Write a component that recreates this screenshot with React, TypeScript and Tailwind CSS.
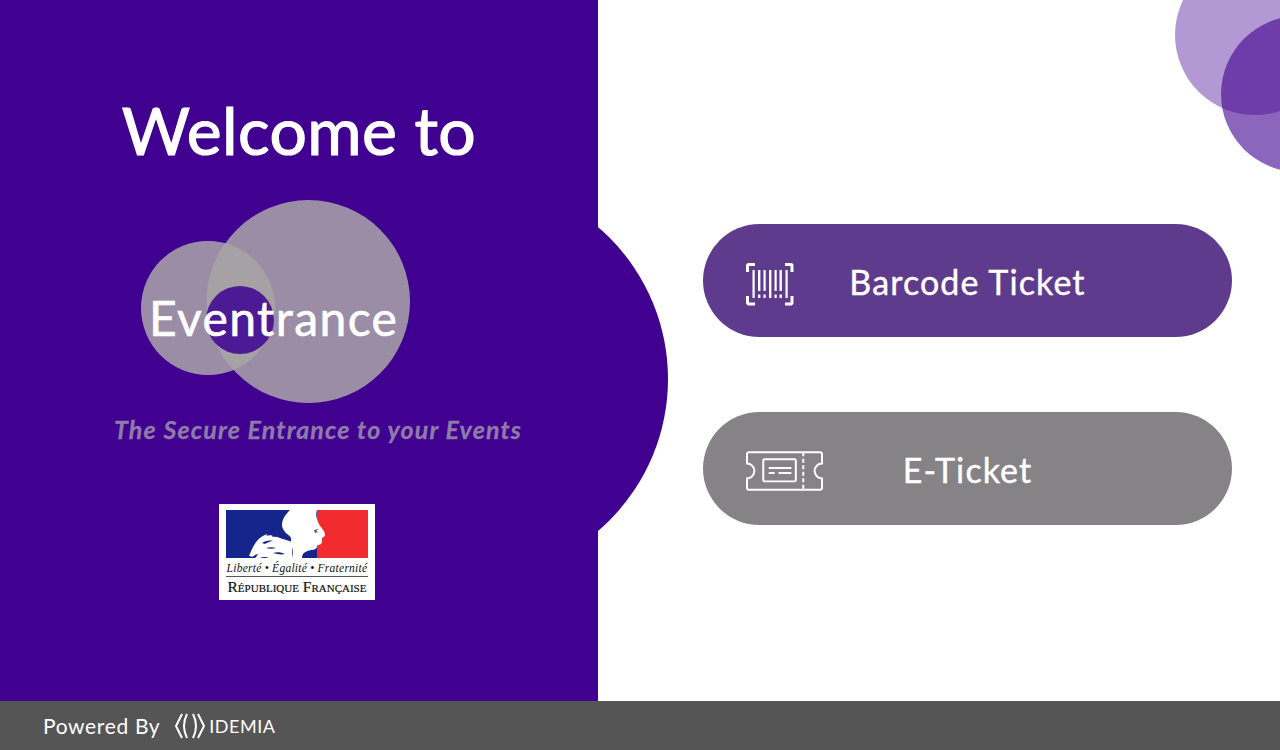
import React from 'react';

const sans = "font-['Lato','Noto_Sans',sans-serif]";

// Barcode scan icon, top right button
const BarcodeIcon = () => (
  <svg width="48" height="43" viewBox="0 0 48 43" fill="none" className="block">
    <g stroke="#fff" strokeWidth="3" fill="none">
      <path d="M1.5 9V2.5a1 1 0 0 1 1-1H9" />
      <path d="M39 1.5h6a1 1 0 0 1 1 1V9" />
      <path d="M1.5 33v6.5a1.6 1.6 0 0 0 1.6 1.6H9" />
      <path d="M39 41.100h5.400a1.600 1.600 0 0 0 1.600-1.600V33" />
    </g>
    <g fill="#fff">
      <rect x="6.500" y="7" width="2.200" height="28" />
      <rect x="12" y="7" width="2.400" height="21" />
      <rect x="12" y="31.500" width="2.400" height="3.500" />
      <rect x="17.500" y="7" width="2.200" height="21" />
      <rect x="17.500" y="31.500" width="2.200" height="3.500" />
      <rect x="23" y="7" width="2.400" height="28" />
      <rect x="28.500" y="7" width="2.200" height="21" />
      <rect x="28.500" y="31.500" width="2.200" height="3.500" />
      <rect x="33.500" y="7" width="2.400" height="21" />
      <rect x="33.500" y="31.500" width="2.400" height="3.500" />
      <rect x="39.500" y="7" width="2.200" height="28" />
    </g>
  </svg>
);

const TicketIcon = () => (
  <svg width="77" height="40" viewBox="0 0 78 40" fill="none" className="block" stroke="#fff" strokeWidth="2">
    <path d="M3 1h72a2 2 0 0 1 2 2v9.500a7.500 7.500 0 0 0 0 15V37a2 2 0 0 1-2 2H3a2 2 0 0 1-2-2v-9.500a7.500 7.500 0 0 0 0-15V3a2 2 0 0 1 2-2z" />
    <rect x="17.500" y="8" width="33" height="22.500" rx="1.500" />
    <path d="M58 1v38" strokeDasharray="4 2.600" />
    <path d="M23 17h23M23 22h6M33 22h13" />
  </svg>
);

const IdemiaMark = () => (
  <svg width="30" height="26" viewBox="0 0 30 26" fill="none" stroke="#fff" strokeWidth="2" className="shrink-0">
    <path d="M7 1 1 13l6 12" />
    <path d="M12 1c-4 8-4 16 0 24" />
    <path d="M18 1c4 8 4 16 0 24" />
    <path d="M23 1l6 12-6 12" />
  </svg>
);

// Marianne flag, drawn in the logo's own coordinates
const MarianneFlag = () => (
  <svg width="142" height="48" viewBox="0 0 142 48" className="block">
    <rect width="142" height="48" fill="#14258c" />
    <rect x="91" width="51" height="48" fill="#f22c2e" />
    <path
      d="M64 0h27c-1 3-1 6 0 9 1 3 2 5 3 7 2 2 5 6 5 9 0 2-3 2-3 4 0 2 0 4-1 5-1 1-4 1-4 2 0 3-3 4-6 4-5 1-9 3-9 8H66c1-4 1-8 0-11-1-3-1-6-1-9 0-2-9-6-9-13 0-6 4-11 8-15z"
      fill="#fff"
    />
    <path d="M88 20l5-1-3 2 2 1-3 1z" fill="#555" />
    <path
      d="M26 39c3-6 7-12 13-14 3-1 3 0 1 1 3-1 8-1 6 1 4-1 8 1 20 5v17H46c-3 0-4-2-7-2-3 0-5 1-7 2-2 0-3 0-3-1 1-1 2-2 3-4-2 0-4 2-6 3-1-1-2-1-3-1z"
      fill="#fff"
    />
    <path d="M36 33c3-2 7-3 11-2-3 0-6 2-8 3zM40 38c3-1 7-1 10 0-3 1-7 1-10 0zM47 43c4-1 8-1 12 1-4 1-8 0-12-1z" fill="#14258c" />
  </svg>
);

function ActionButton({ label, icon, color }: { label: string; icon: React.ReactNode; color: string }) {
  return (
    <button className={`relative flex h-[113px] w-[529px] items-center justify-center rounded-[58px] ${color}`}>
      <span className="absolute left-[43px] top-[39px]">{icon}</span>
      <span className="pt-[3px] text-[34px] leading-none tracking-[1.1px] text-white [-webkit-text-stroke:0.4px_white]">{label}</span>
    </button>
  );
}

export default function App() {
  return (
    <div className={`flex h-[750px] w-[1280px] flex-col overflow-hidden bg-white ${sans}`}>
      <div className="flex h-[701px]">
        {/* Left purple panel with the half circle sticking out */}
        <section className="relative z-10 flex w-[598px] shrink-0 flex-col bg-[#400090]">
          <div className="absolute left-[268px] top-[179px] -z-10 h-[400px] w-[400px] rounded-full bg-[#400090]" />

          <h1 className="mt-[94px] text-center text-[66px] font-normal leading-[72px] tracking-[0.4px] text-white [-webkit-text-stroke:1.2px_white]">Welcome to</h1>

          {/* Logo, three overlapping circles */}
          <div className="relative ml-[141px] mt-[34px] h-[203px] w-[269px]">
            <div className="absolute left-[65.5px] top-0 h-[203px] w-[203px] rounded-full bg-[#9c8da6]" />
            <div className="absolute left-0 top-[41px] h-[134px] w-[134px] rounded-full bg-[#9c8da6]" />
            <svg width="269" height="203" viewBox="0 0 269 203" className="absolute left-0 top-0">
              <defs>
                <clipPath id="smallCircle"><circle cx="67" cy="108" r="67" /></clipPath>
              </defs>
              <circle cx="167" cy="101.500" r="101.500" fill="#a5a1a5" clipPath="url(#smallCircle)" />
            </svg>
            <div className="absolute left-[65px] top-[85.5px] h-[68px] w-[68px] rounded-full bg-[#4d1a96]" />
            <span className="absolute left-[8px] top-[90px] text-[48px] leading-[56px] tracking-[1.4px] text-white [-webkit-text-stroke:0.6px_white]">Eventrance</span>
          </div>

          <p className="ml-[114px] mt-[12px] whitespace-nowrap text-[25px] font-bold italic leading-[28px] tracking-[1.15px] text-[#8f7ba8] [-webkit-text-stroke:0.3px_#8f7ba8]">The Secure Entrance to your Events</p>

          {/* République Française logo */}
          <div className="ml-[219px] mt-[61px] flex h-[96px] w-[156px] flex-col bg-white px-[7px] pt-[6px]">
            <MarianneFlag />
            <p className="mt-[4px] whitespace-nowrap border-b border-[#555] pb-[2px] text-center font-['Liberation_Serif',serif] text-[11.5px] italic leading-[12px] tracking-[0.25px] text-[#111]">
              Liberté • Égalité • Fraternité
            </p>
            <p className="mt-[1px] whitespace-nowrap text-center font-['Liberation_Serif',serif] text-[15.5px] leading-[17px] text-[#111] [font-variant-caps:small-caps] [-webkit-text-stroke:0.2px_#111]">
              République Française
            </p>
          </div>
        </section>

        {/* Right side with the two choices */}
        <main className="relative flex flex-1 flex-col gap-[75px] overflow-hidden pl-[105px] pt-[224px]">
          <div className="absolute left-[577px] top-[-45px] h-[160px] w-[160px] rounded-full bg-[#400090]/40" />
          <div className="absolute left-[623px] top-[16px] h-[156px] w-[156px] rounded-full bg-[#400090]/60" />
          <ActionButton label="Barcode Ticket" icon={<BarcodeIcon />} color="bg-[#5f3b8e]" />
          <ActionButton label="E-Ticket" icon={<TicketIcon />} color="bg-[#858385]" />
        </main>
      </div>

      <footer className="flex h-[49px] items-center bg-[#555555] pl-[43px] text-white">
        <span className="text-[21px] leading-none tracking-[0.65px]">Powered By</span>
        <span className="ml-[15px] flex items-center gap-[4px]">
          <IdemiaMark />
          <span className="text-[18px] leading-none tracking-[0.5px]">IDEMIA</span>
        </span>
      </footer>
    </div>
  );
}
